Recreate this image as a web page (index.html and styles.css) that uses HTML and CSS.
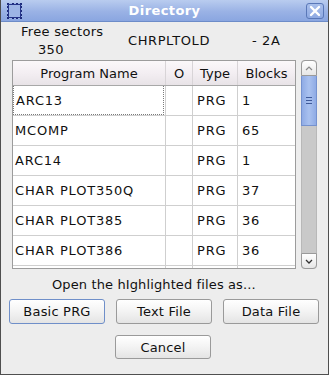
FILE: index.html
```html
<!DOCTYPE html>
<html>
<head>
<meta charset="utf-8">
<link rel="stylesheet" href="styles.css">
</head>
<body>
<div class="window">
  <div class="titlebar">
    <span class="win-icon"></span>
    <span class="title">Directory</span>
    <span class="close-btn">
      <svg width="12" height="12" viewBox="0 0 12 12"><path d="M2 2 L10 10 M10 2 L2 10" stroke="#ffffff" stroke-width="2.4" stroke-linecap="round"/></svg>
    </span>
  </div>
  <div class="info">
    <div class="info-free">
      <div class="free-label">Free sectors</div>
      <div class="free-num">350</div>
    </div>
    <div class="info-name">CHRPLTOLD</div>
    <div class="info-id">- 2A</div>
  </div>
  <div class="list-area">
    <div class="table">
      <div class="row head">
        <div class="cell">Program Name</div>
        <div class="cell">O</div>
        <div class="cell">Type</div>
        <div class="cell">Blocks</div>
      </div>
      <div class="row">
        <div class="cell name"><span class="focus">ARC13</span></div>
        <div class="cell"></div>
        <div class="cell">PRG</div>
        <div class="cell">1</div>
      </div>
      <div class="row">
        <div class="cell name">MCOMP</div>
        <div class="cell"></div>
        <div class="cell">PRG</div>
        <div class="cell">65</div>
      </div>
      <div class="row">
        <div class="cell name">ARC14</div>
        <div class="cell"></div>
        <div class="cell">PRG</div>
        <div class="cell">1</div>
      </div>
      <div class="row">
        <div class="cell name">CHAR PLOT350Q</div>
        <div class="cell"></div>
        <div class="cell">PRG</div>
        <div class="cell">37</div>
      </div>
      <div class="row">
        <div class="cell name">CHAR PLOT385</div>
        <div class="cell"></div>
        <div class="cell">PRG</div>
        <div class="cell">36</div>
      </div>
      <div class="row">
        <div class="cell name">CHAR PLOT386</div>
        <div class="cell"></div>
        <div class="cell">PRG</div>
        <div class="cell">36</div>
      </div>
      <div class="row">
        <div class="cell name"></div>
        <div class="cell"></div>
        <div class="cell"></div>
        <div class="cell"></div>
      </div>
    </div>
    <div class="scrollbar">
      <div class="sb-btn sb-up">
        <svg width="8" height="5" viewBox="0 0 8 5"><path d="M1 4 L4 1 L7 4" fill="none" stroke="#8a8a8a" stroke-width="1.2"/></svg>
      </div>
      <div class="sb-thumb"><span class="grip"></span></div>
      <div class="sb-trough"></div>
      <div class="sb-btn sb-down">
        <svg width="8" height="5" viewBox="0 0 8 5"><path d="M1 1 L4 4 L7 1" fill="none" stroke="#333" stroke-width="1.3"/></svg>
      </div>
    </div>
  </div>
  <div class="prompt">Open the hIghlighted files as...</div>
  <div class="buttons">
    <div class="btn focused">Basic PRG</div>
    <div class="btn">Text File</div>
    <div class="btn">Data File</div>
  </div>
  <div class="cancel-row">
    <div class="btn">Cancel</div>
  </div>
</div>
</body>
</html>
```
FILE: styles.css
```css
* { box-sizing: border-box; }
html, body { margin: 0; padding: 0; }
body {
  width: 329px;
  height: 375px;
  font-family: "DejaVu Sans", sans-serif;
  font-size: 13px;
  color: #111;
  background: #ededed;
}
.window {
  width: 329px;
  height: 375px;
  border: 1px solid #4f4f4f;
  border-top: none;
  background: #ededed;
  overflow: hidden;
}
.titlebar {
  height: 22px;
  margin: 0 -1px;
  background: linear-gradient(#b9ccef, #9ab2e5 55%, #8aa6e0);
  border-bottom: 1px solid #6d8cc8;
  display: flex;
  align-items: center;
  padding: 0 5px 0 7px;
}
.win-icon {
  width: 15px;
  height: 16px;
  border: 2px dotted #1c2a7a;
  outline: 1px solid #26358a;
  outline-offset: -2px;
  background: #9db5e6;
}
.title {
  flex: 1;
  text-align: center;
  color: #ffffff;
  font-weight: bold;
  font-size: 13px;
  letter-spacing: 0.4px;
  padding-left: 1px;
}
.close-btn {
  width: 18px;
  height: 16px;
  border: 1px solid #5a78b8;
  border-radius: 3px;
  background: linear-gradient(#a9bfeb, #8ea9e2);
  display: flex;
  align-items: center;
  justify-content: center;
}
.info {
  display: flex;
  height: 36px;
  margin-top: 1px;
  align-items: center;
  line-height: 18px;
}
.info-free { width: 127px; letter-spacing: 0.3px; }
.free-label { padding-left: 20px; }
.free-num { padding-left: 37px; }
.info-name { width: 124px; letter-spacing: 0.6px; }
.info-id { letter-spacing: 0.6px; }
.list-area {
  display: flex;
  margin: 1px 0 0 11px;
  gap: 5px;
}
.table {
  width: 284px;
  height: 209px;
  border: 1px solid #9c9c9c;
  background: #ffffff;
  overflow: hidden;
}
.row {
  display: grid;
  grid-template-columns: 153px 27px 45px 57px;
  height: 30px;
  border-bottom: 1px solid #cfcfcf;
}
.row.head {
  height: 25px;
  border-bottom: 1px solid #a8a8a8;
  background: linear-gradient(#fbf8fa, #f3eef2 50%, #e8e3e7);
}
.cell {
  border-right: 1px solid #cfcfcf;
  display: flex;
  align-items: center;
  padding-left: 4px;
  white-space: nowrap;
  letter-spacing: 0.8px;
}
.cell:last-child { border-right: none; }
.row.head .cell {
  justify-content: center;
  padding-left: 0;
  letter-spacing: 0;
  border-right: 1px solid #d8d4d7;
}
.row.head .cell:last-child { border-right: none; }
.cell.name { padding-left: 2px; }
.focus {
  display: flex;
  align-items: center;
  width: 151px;
  height: 29px;
  margin-left: -2px;
  padding-left: 2px;
  border: 1px dotted #7a7a7a;
  border-top: none;
}
.scrollbar {
  width: 16px;
  height: 209px;
  display: flex;
  flex-direction: column;
  background: #c8c8c8;
  border-radius: 4px;
}
.sb-btn {
  height: 16px;
  background: linear-gradient(#ffffff, #e6e6e6);
  border: 1px solid #9a9a9a;
  display: flex;
  align-items: center;
  justify-content: center;
}
.sb-up { border-radius: 4px 4px 0 0; }
.sb-down { border-radius: 0 0 4px 4px; }
.sb-thumb {
  height: 50px;
  background: linear-gradient(90deg, #8fabe5, #a9c1ef 50%, #8fabe5);
  border: 1px solid #7592cf;
  border-top: none;
  display: flex;
  align-items: center;
  justify-content: center;
}
.grip {
  width: 6px;
  height: 7px;
  border-top: 1px solid #3f5a9a;
  border-bottom: 1px solid #3f5a9a;
  background: linear-gradient(#3f5a9a, #3f5a9a) center / 6px 1px no-repeat;
}
.sb-trough {
  flex: 1;
  background: #c9c9c9;
  border-left: 1px solid #b8b8b8;
  border-right: 1px solid #b8b8b8;
}
.prompt {
  margin-top: 8px;
  padding-left: 51px;
  line-height: 16px;
  letter-spacing: 0.12px;
}
.buttons {
  display: flex;
  gap: 11px;
  margin: 6px 0 0 8px;
}
.btn {
  width: 96px;
  height: 25px;
  border: 1px solid #9a9a9a;
  border-radius: 3px;
  background: linear-gradient(#ffffff, #f3f3f3 50%, #e4e4e4);
  display: flex;
  align-items: center;
  justify-content: center;
  letter-spacing: 0.2px;
}
.btn.focused {
  border-color: #6f8fc9;
}
.cancel-row {
  margin: 11px 0 0 114px;
}
.cancel-row .btn { height: 24px; }
```
